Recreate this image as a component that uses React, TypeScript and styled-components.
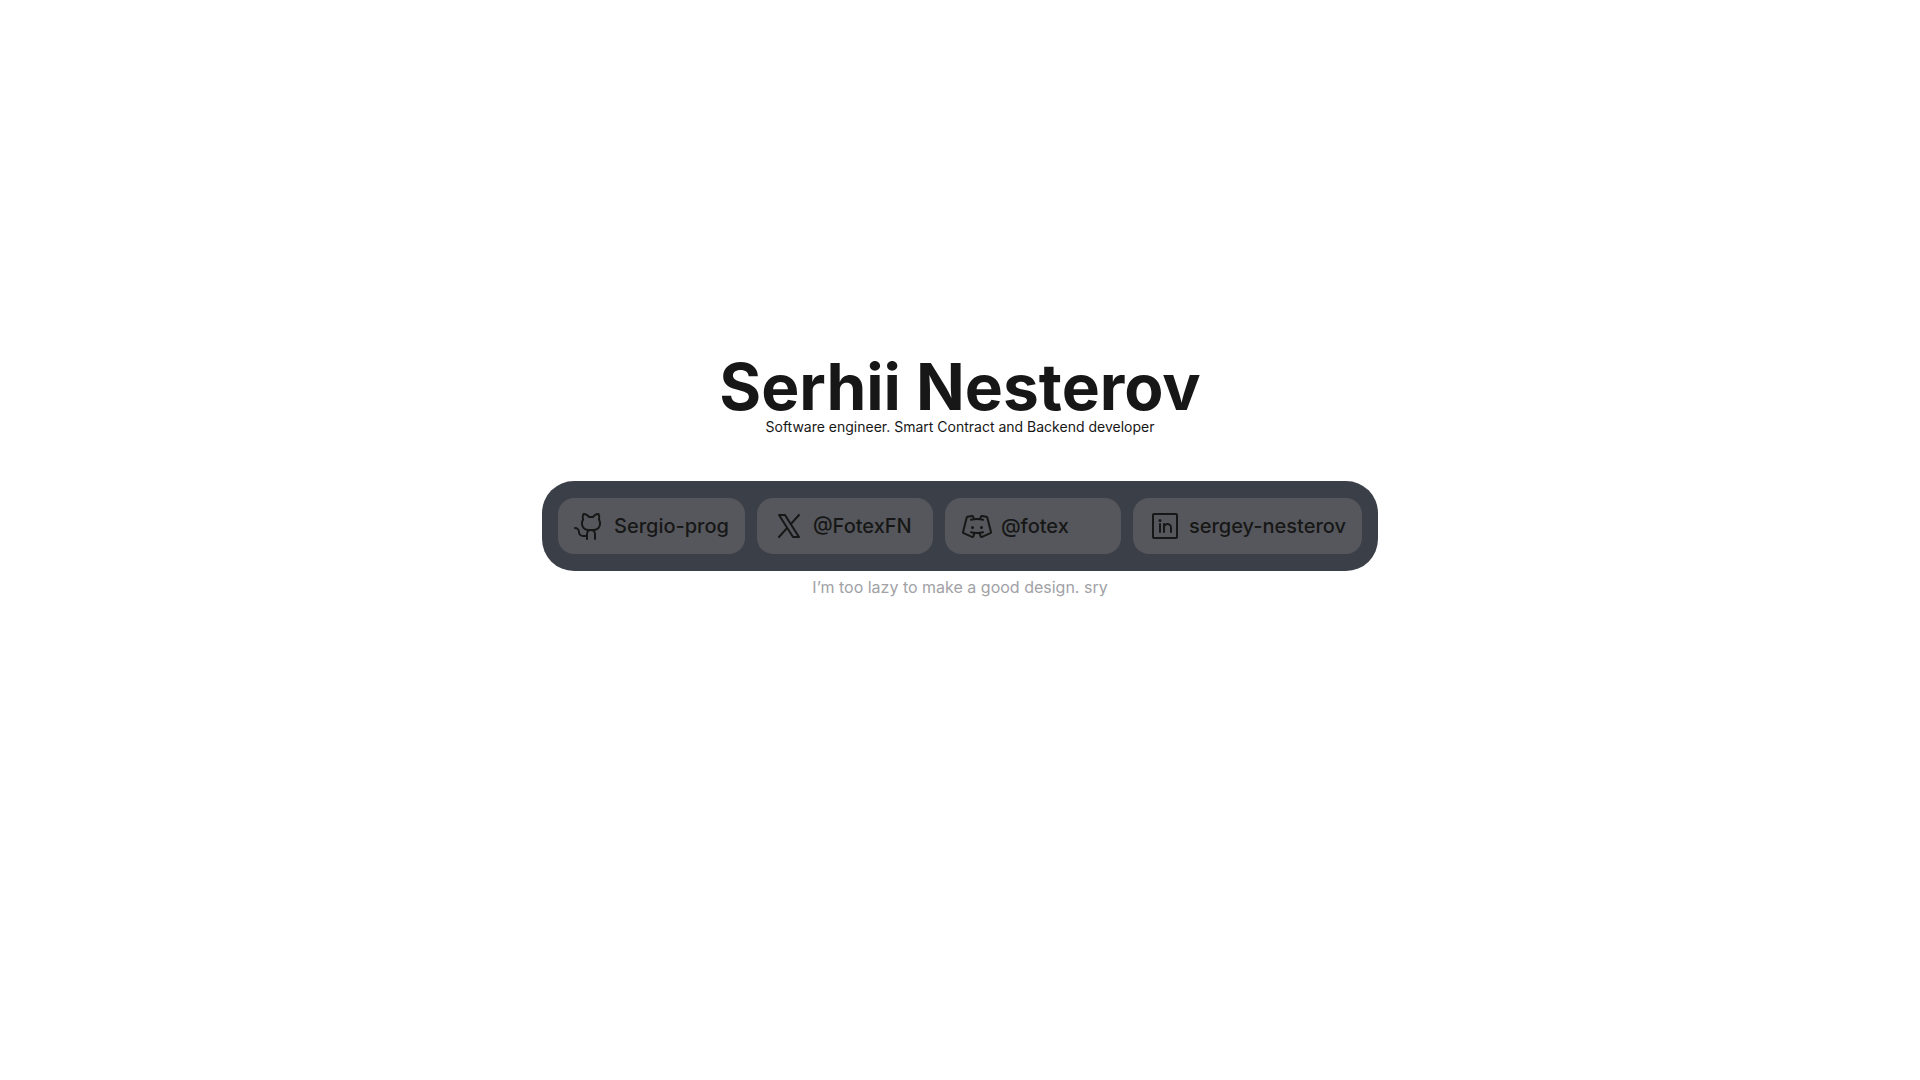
import type { ComponentType } from "react";
import styled, { createGlobalStyle } from "styled-components";
import {
  PiDiscordLogo,
  PiGithubLogo,
  PiLinkedinLogo,
  PiXLogo,
} from "react-icons/pi";

const GlobalStyle = createGlobalStyle`
  *, *::before, *::after {
    box-sizing: border-box;
  }

  body {
    margin: 0;
    background: #ffffff;
    color: #171717;
    font-family: Inter, "Liberation Sans", sans-serif;
    -webkit-font-smoothing: antialiased;
  }
`;

const Page = styled.main`
  display: flex;
  flex-direction: column;
  align-items: center;
  justify-content: center;
  min-height: 100vh;
  padding: 0 16px 124px;
  text-align: center;
`;

const Intro = styled.header`
  margin-bottom: 44px;
`;

const Name = styled.h1`
  margin: 0;
  font-size: 64px;
  font-weight: 700;
  line-height: 60px;
`;

const Role = styled.p`
  margin: 0;
  font-size: 14px;
  line-height: 20px;
`;

const Socials = styled.nav`
  display: flex;
  flex-wrap: wrap;
  justify-content: center;
  gap: 12px;
  padding: 17px 16px;
  border-radius: 32px;
  background: #3a3f48;
`;

const SocialLink = styled.a`
  display: flex;
  align-items: center;
  gap: 8px;
  min-width: 176px;
  height: 56px;
  padding: 0 16px;
  border-radius: 16px;
  background: #56575c;
  color: #171717;
  font-size: 20px;
  font-weight: 500;
  line-height: 28px;
  text-decoration: none;
`;

const Note = styled.p`
  margin: 4px 0 0;
  color: #a1a1a6;
  font-size: 16px;
  line-height: 24px;
`;

interface Social {
  label: string;
  href: string;
  Icon: ComponentType<{ size?: number; "aria-hidden"?: boolean }>;
}

const socials: Social[] = [
  { label: "Sergio-prog", href: "#github", Icon: PiGithubLogo },
  { label: "@FotexFN", href: "#x", Icon: PiXLogo },
  { label: "@fotex", href: "#discord", Icon: PiDiscordLogo },
  { label: "sergey-nesterov", href: "#linkedin", Icon: PiLinkedinLogo },
];

export default function App() {
  return (
    <>
      <GlobalStyle />
      <Page>
        <Intro>
          <Name>Serhii Nesterov</Name>
          <Role>Software engineer. Smart Contract and Backend developer</Role>
        </Intro>
        <Socials>
          {socials.map(({ label, href, Icon }) => (
            <SocialLink key={label} href={href}>
              <Icon size={32} aria-hidden />
              <span>{label}</span>
            </SocialLink>
          ))}
        </Socials>
        <Note>I’m too lazy to make a good design. sry</Note>
      </Page>
    </>
  );
}
